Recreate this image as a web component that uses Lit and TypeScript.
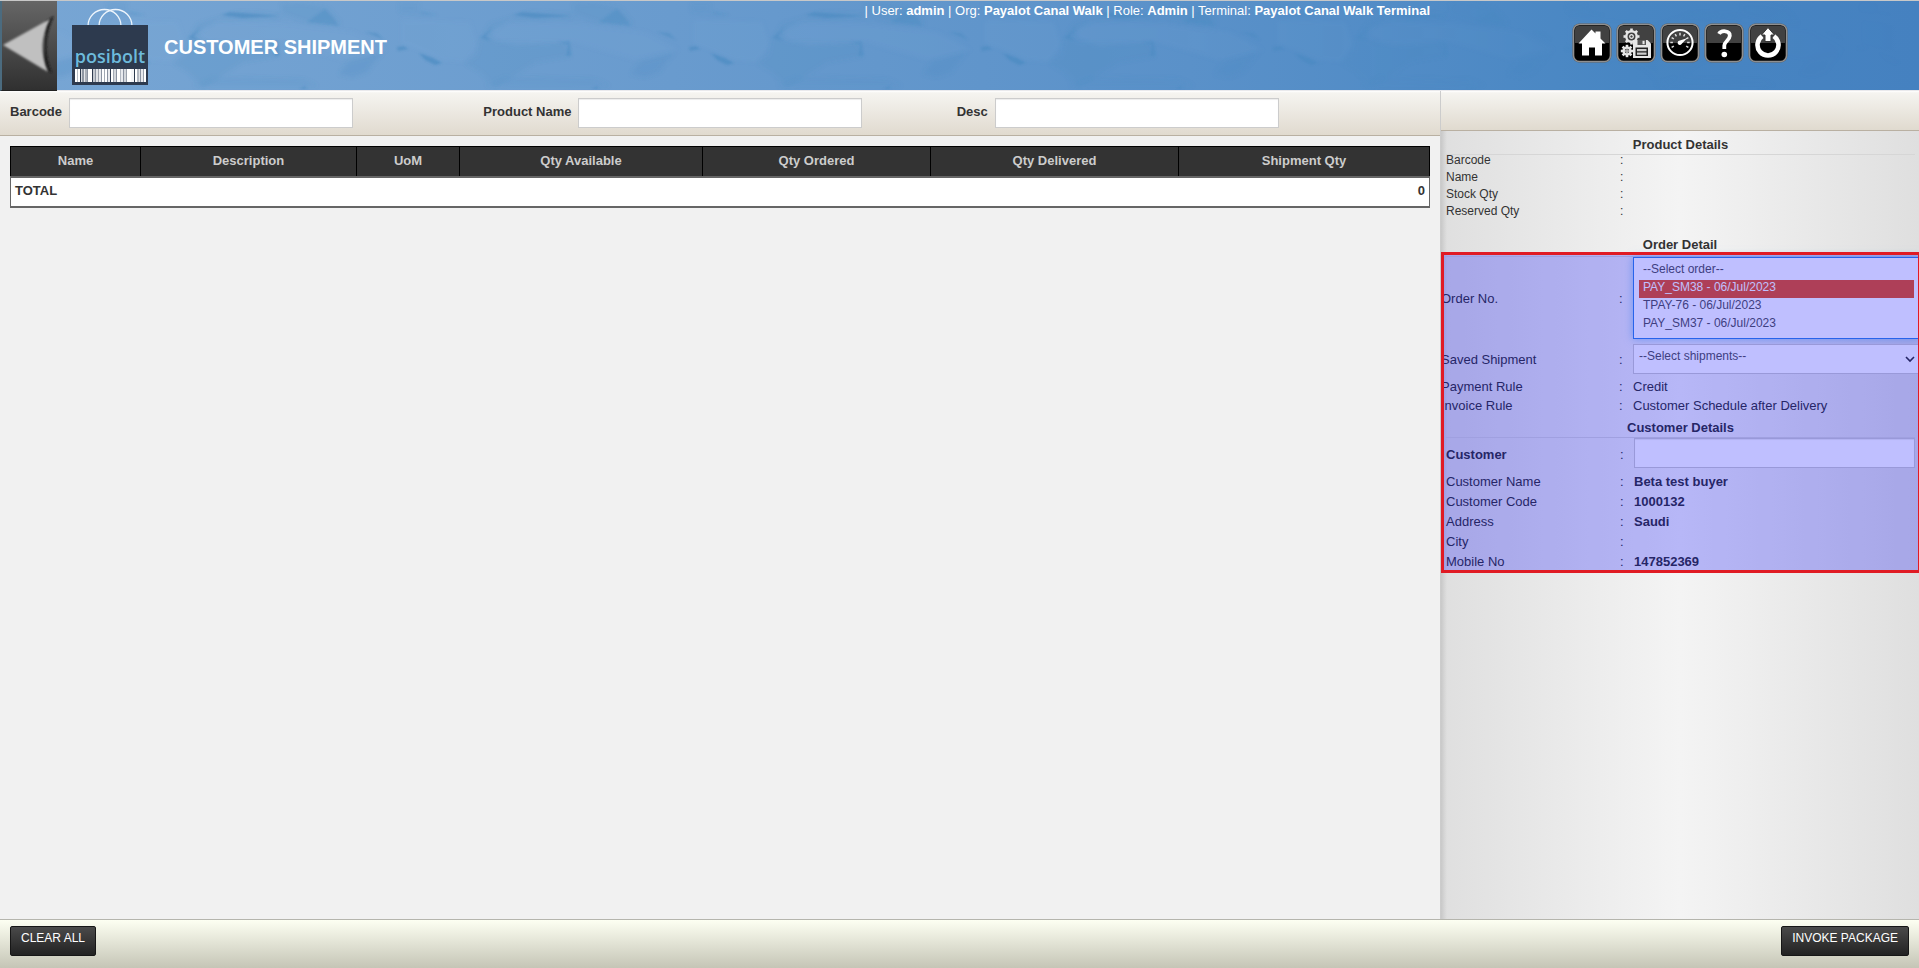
import { LitElement, html, svg, css } from "lit";
import { customElement } from "lit/decorators.js";

const ORDERS = ["--Select order--", "PAY_SM38 - 06/Jul/2023", "TPAY-76 - 06/Jul/2023", "PAY_SM37 - 06/Jul/2023"];
const COLUMNS = [
  ["Name", "c-name"], ["Description", "c-desc"], ["UoM", "c-uom"], ["Qty Available", "c-avail"],
  ["Qty Ordered", "c-ord"], ["Qty Delivered", "c-del"], ["Shipment Qty", "c-ship"],
];
const CUSTOMER = [
  ["Customer Name", "Beta test buyer"], ["Customer Code", "1000132"], ["Address", "Saudi"],
  ["City", ""], ["Mobile No", "147852369"],
];

// Barcode stripes of the logo: x, width, grey level
const BARS: [number, number, string][] = [
  [3, 2, "#fff"], [5, 1, "#b9bfc6"], [6, 2, "#fff"], [9, 1, "#d8dbe0"], [10, 2, "#8e96a2"], [12, 1, "#e4e6ea"],
  [13, 2, "#a9afb8"], [15, 1, "#8a92a0"], [16, 4, "#fff"], [21, 2, "#c3c8cf"], [23, 1, "#8a92a0"], [24, 2, "#dfe2e6"],
  [26, 1, "#9aa1ac"], [27, 2, "#e8eaee"], [29, 1, "#8a92a0"], [30, 2, "#fff"], [32, 1, "#a2a9b3"], [33, 2, "#fff"],
  [35, 1, "#8a92a0"], [36, 2, "#e8eaee"], [39, 2, "#fff"], [41, 1, "#a2a9b3"], [42, 2, "#d3d7dc"], [44, 1, "#8a92a0"],
  [45, 3, "#fff"], [48, 1, "#b1b7c0"], [49, 2, "#e8eaee"], [51, 1, "#8a92a0"], [52, 2, "#d3d7dc"], [54, 1, "#9aa1ac"],
  [55, 4, "#fff"], [59, 3, "#f4f5f7"], [63, 2, "#fff"], [65, 2, "#b1b7c0"], [67, 1, "#dfe2e6"], [68, 1, "#8a92a0"],
  [69, 2, "#e8eaee"], [71, 1, "#9aa1ac"], [72, 2, "#fff"],
];

const gear = (cx: number, cy: number, r: number) => svg`
  <g transform="translate(${cx} ${cy})" stroke="#e6e6e6" fill="none">
    <circle r=${r} stroke-width="2.4"/>
    <circle r=${r * 0.35} stroke-width="1.2"/>
    ${[0, 45, 90, 135, 180, 225, 270, 315].map(
      (a) => svg`<path d="M0 ${-r - 0.5}V${-r - 2.8}" stroke-width="2.6" transform="rotate(${a})"/>`)}
  </g>`;

const ticks = [-120, -90, -60, -30, 0, 30, 60, 90, 120];

const ICONS = [
  ["Home", svg`<path fill="#fff" d="M19.5 6.5L23.5 10.5V8.5H28.5V15.5L33.5 20.5H30V32.5H23V24.5H17V32.5H10V20.5H6.5Z"/>`],
  ["Save settings", svg`${gear(15.5, 13.5, 5.2)}${gear(11, 28, 3.4)}
    <path fill="#e6e6e6" d="M17 17H31.5L35 20.5V35H17Z"/>
    <path fill="#555" d="M21.5 17H30V22H21.5Z"/><path fill="#e6e6e6" d="M26.5 17.8H28.6V21.2H26.5Z"/>
    <path fill="#222" d="M19.5 24.5H32V33H19.5Z"/><path fill="#ccc" d="M21 26H30.5V28.2H21ZM21 29.6H30.5V31.8H21Z"/>`],
  ["Dashboard", svg`<circle cx="20" cy="19.5" r="12.6" fill="none" stroke="#fff" stroke-width="2"/>
    ${ticks.map((a) => svg`<path d="M20 9.8V12.4" stroke="#ddd" stroke-width="1.5" transform="rotate(${a} 20 19.5)"/>`)}
    <path fill="#fff" d="M27 15.2L21.8 20.8A2.2 2.2 0 1 1 19 17.8Z"/>`],
  ["Help", svg`<path fill="none" stroke="#fff" stroke-width="3.8" d="M15 10.8C17 7.2 26 7 25.8 12.8C25.4 17.6 20.3 18.4 20.3 22.6V26"/>
    <circle cx="20.3" cy="31.5" r="2.8" fill="#fff"/>`],
  ["Log out", svg`<path fill="none" stroke="#fff" stroke-width="4.6" d="M14.2 13.2A10.5 10.5 0 1 0 25.8 13.2"/>
    <path fill="#fff" stroke="#333" stroke-width="1" d="M20 4.5L26.5 12H23V18.5H17V12H13.5Z"/>`],
] as const;

@customElement("app-root")
export class AppRoot extends LitElement {
  static styles = css`
    :host {
      display: flex; flex-direction: column; min-height: 100vh; box-sizing: border-box;
      font: 13px/17px "Liberation Sans", Arial, sans-serif; color: #333; background: #f1f1f1;
      overflow-x: hidden;
    }
    *, *::before, *::after { box-sizing: border-box; }
    .split { display: grid; grid-template-columns: minmax(0, 1440fr) minmax(0, 479fr); }

    .header {
      position: relative; height: 91px; border-top: 1px solid #c8c8c8; border-bottom: 1px solid #e9e9ec;
      background: linear-gradient(90deg, #78a6d4, #699bce 35%, #5a91c9 62%, #4886c3 85%, #4581c0);
      color: #fff;
    }
    .texture { position: absolute; inset: 0; width: 100%; height: 100%; }
    .brand { position: relative; display: flex; align-items: flex-start; }
    .back {
      width: 57px; height: 90px; flex: none; padding: 0; border: 0; border-left: 2px solid #4b6b7f;
      border-bottom: 1px solid #222; background: linear-gradient(#666, #303030); cursor: pointer;
    }
    .back svg, .logo { display: block; }
    .logo { margin: 6px 0 0 15px; flex: none; }
    .title { margin: 33px 0 0 16px; font-size: 20px; line-height: 26px; font-weight: bold; white-space: nowrap; }
    .session { margin: 1px 10px 0 auto; line-height: 18px; white-space: nowrap; }
    .tools { position: relative; display: flex; gap: 4px; padding: 22px 0 0 132px; }
    .tool { width: 40px; height: 40px; flex: none; display: block; }

    .body { flex: 1; }
    .main { min-width: 0; }
    .bar { background: linear-gradient(#fff 0, #f5f4f0 2px, #e0dacf); border-bottom: 1px solid #b9b0a2; }
    .filters { display: grid; grid-template-columns: repeat(3, 1fr); height: 45px; padding: 7px 10px 0; }
    .field { display: flex; align-items: flex-start; }
    .field label { font-weight: bold; line-height: 28px; margin-right: 7px; white-space: nowrap; }
    .box { border: 1px solid #ccc; height: 30px; background: #fff; box-shadow: inset 0 1px 1px rgba(0,0,0,.075);
      font: inherit; color: #555; padding: 4px 6px; border-radius: 0; outline: 0; min-width: 0; }
    .field .box { width: 284px; }

    .grid-wrap { padding: 10px 10px 0; }
    .lines { width: 100%; table-layout: fixed; border-collapse: separate; border-spacing: 0; }
    .c-name { width: 130px; } .c-desc { width: 216px; } .c-uom { width: 103px; } .c-avail { width: 243px; }
    .c-ord { width: 228px; } .c-del { width: 248px; } .c-ship { width: 252px; }
    .lines th { height: 30px; padding: 0 0 3px; background: #333; color: #ccc; border-top: 1px solid #000;
      border-left: 1px solid #000; }
    .lines th:last-child { border-right: 1px solid #000; }
    .lines td { height: 32px; padding: 0 4px 4px; background: #fff; font-weight: bold;
      border-top: 2px solid #666; border-bottom: 2px solid #666; }
    .lines td:first-child { border-left: 1px solid #666; }
    .lines td:last-child { border-right: 1px solid #666; text-align: right; }

    .side { border-left: 1px solid #ccc; overflow: hidden;
      background: linear-gradient(90deg, rgba(0,0,0,.1), transparent 6px), linear-gradient(90deg, #dfdfdf, #f4f4f4 50%, #dfdfdf); }
    .side .bar { height: 40px; }
    .heading { margin: 0; font-size: 13px; font-weight: bold; text-align: center; }
    .ruled { border-bottom: 1px solid #d6d6d6; margin: 0 4px 0 5px; padding-top: 3px; line-height: 19px; }
    .product { padding-top: 1px; margin-bottom: 18px; font-size: 12px; }
    .product .ruled { margin-bottom: -3px; }
    .row { display: grid; grid-template-columns: 174px 14px minmax(0, 1fr); padding-left: 5px; }
    .strong { font-weight: bold; }
    .order-title { line-height: 14px; }

    .selected-area { position: relative; padding: 4px 0 1px; }
    .selected-area::after { content: ""; position: absolute; inset: 0 -2px 0 0; border: 3px solid #e01b24;
      background: rgba(0,0,255,.25); background-clip: padding-box; pointer-events: none; }
    .order { border-top: 1px solid #d6d6d6; }
    .order .row { padding-left: 0; grid-template-columns: 178px 14px minmax(0, 1fr); line-height: 19px; align-items: center; }
    .order .row + .row.picker { margin-top: 5px; margin-bottom: 3px; }
    .orders {
      display: block; width: 100%; height: 82px; padding: 4px 5px; border: 1px solid #3584e4; border-right: 0; border-radius: 0;
      background: #fff; color: #555; font: 12px/17px "Liberation Sans", Arial, sans-serif; outline: 0; overflow: hidden;
      box-shadow: 0 0 8px rgba(82,168,236,.6);
    }
    .orders option { height: 18px; min-height: 18px; padding: 0 4px 2px; line-height: 16px; }
    .orders option:checked { background: #e95420 linear-gradient(#e95420, #e95420); color: #fff; }
    .drop { position: relative; }
    .drop select { appearance: none; display: block; width: 100%; height: 30px; padding: 0 24px 5px 5px; border: 1px solid #ccc;
      border-right: 0; border-radius: 0; background: #fff; color: #555; font: 12px/17px "Liberation Sans", Arial, sans-serif; outline: 0; }
    .drop svg { position: absolute; right: 4px; top: 11px; pointer-events: none; }
    .customer .row { line-height: 20px; padding-right: 4px; }
    .customer .row.entry { line-height: 34px; }
    .customer .box { width: 100%; }

    .footer { display: flex; justify-content: space-between; height: 49px; padding: 6px 10px; border-top: 1px solid #b5b5ad;
      background: linear-gradient(#fdfff2, #c5c5b6); }
    .btn { height: 30px; padding: 0 10px 5px; border: 1px solid #161616; border-radius: 2px; color: #fff; cursor: pointer;
      background: linear-gradient(#4a4a4a, #222); font: 12px/17px "Liberation Sans", Arial, sans-serif; white-space: nowrap; }
  `;

  private texture() {
    return html`<svg class="texture" aria-hidden="true">
      <defs>
        <filter id="soft" x="-10%" y="-10%" width="120%" height="120%"><feGaussianBlur stdDeviation="2"/></filter>
        <filter id="fine" x="-10%" y="-10%" width="120%" height="120%"><feGaussianBlur stdDeviation=".9"/></filter>
        <linearGradient id="fade"><stop offset="0" stop-color="#ddd"/><stop offset=".6" stop-color="#aaa"/><stop offset=".85" stop-color="#333"/><stop offset="1" stop-color="#000"/></linearGradient>
        <mask id="m"><rect width="100%" height="100%" fill="url(#fade)"/></mask>
        <pattern id="rock" x="103" y="-1" width="292" height="91" patternUnits="userSpaceOnUse">
          <g filter="url(#soft)" fill="#3f86bd">
            <path opacity=".16" d="M85 40L95 24L135 12L180 14L176 18L115 20L92 35L100 42L170 43L176 56L140 62L100 88L85 72L70 63L82 55Z"/>
            <path opacity=".16" d="M178 4L200 3L225 8L238 24L204 22L180 14Z"/>
            <path opacity=".22" d="M236 74L245 62L280 52L268 66L264 72L250 77Z"/>
            <path opacity=".14" d="M4 12L44 16L22 11L24 3L4 3Z"/>
            <path opacity=".14" d="M90 86L110 77L200 79L215 86Z"/>
          </g>
          <g filter="url(#fine)" fill="#3f86bd">
            <path opacity=".35" d="M204 22L222 9L229 16L236 26Z"/>
            <path opacity=".6" d="M118 15L127 12L176 16L140 18Z"/>
            <path opacity=".65" d="M24 53L38 58L47 63L40 65L30 60Z"/>
            <path opacity=".6" d="M2 47L9 46L13 49L3 51Z"/>
            <path opacity=".45" d="M85 38L98 27L91 36L96 41ZM162 42L175 41L176 56L171 56L173 45ZM24 12L42 15L28 14ZM262 32L274 33L281 40ZM196 89L202 86L204 89Z"/>
          </g>
          <g filter="url(#soft)" fill="#8db6e0">
            <path opacity=".12" d="M98 28L115 22L185 24L250 32L284 50L240 60L178 42L120 46L98 38Z"/>
            <path opacity=".1" d="M6 20L75 22L82 45L70 62L48 60L14 46L6 44Z"/>
          </g>
        </pattern>
      </defs>
      <rect width="100%" height="100%" fill="url(#rock)" mask="url(#m)"/>
    </svg>`;
  }

  private logo() {
    return html`<svg class="logo" width="76" height="79" viewBox="0 0 76 79" role="img" aria-label="posibolt">
      <g fill="none" stroke="#eef5fc" stroke-width="1.3"><path d="M16 19A16.5 16.5 0 0 1 49 19"/><path d="M27 19A16.5 16.5 0 0 1 60 19"/></g>
      <rect y="18" width="76" height="60" fill="#2d3a4e"/>
      <text x="38" y="56" text-anchor="middle" font-family="Open Sans" font-weight="600" font-size="18" fill="#6dbbdc">posibolt</text>
      ${BARS.map(([x, w, c]) => svg`<rect x=${x} y="62" width=${w} height="13" fill=${c}/>`)}
    </svg>`;
  }

  private icon(name: string, glyph: unknown) {
    return html`<a class="tool" href="#" aria-label=${name}><svg width="40" height="40" viewBox="0 0 40 40">
      <rect x=".5" y=".5" width="39" height="39" rx="7" fill="#555"/>
      <rect x="1.5" y="1.5" width="37" height="37" rx="6" fill="#000" stroke="#8f8f8f" stroke-width="1.6"/>
      <path fill="#414141" d="M3 20V7A4 4 0 0 1 7 3H33A4 4 0 0 1 37 7V20Z"/>
      ${glyph}</svg></a>`;
  }

  render() {
    return html`
      <header class="header split">
        ${this.texture()}
        <div class="brand">
          <button class="back" aria-label="Back"><svg width="55" height="89" viewBox="0 0 55 89">
            <defs><filter id="b"><feGaussianBlur stdDeviation=".8"/></filter></defs>
            <path filter="url(#b)" fill="#1c1c1c" d="M44 20L52 15Q38 44 50 72L42 68Z"/>
            <path filter="url(#b)" fill="#c0c0c0" d="M1 44L48 18Q34 44 46 71Z"/></svg></button>
          ${this.logo()}
          <h1 class="title">CUSTOMER SHIPMENT</h1>
          <div class="session">| User: <b>admin</b> | Org: <b>Payalot Canal Walk</b> | Role: <b>Admin</b> | Terminal: <b>Payalot Canal Walk Terminal</b></div>
        </div>
        <nav class="tools">${ICONS.map(([n, g]) => this.icon(n, g))}</nav>
      </header>

      <div class="body split">
        <main class="main">
          <div class="bar filters">
            <div class="field"><label for="barcode">Barcode</label><input class="box" id="barcode"></div>
            <div class="field"><label for="pname">Product Name</label><input class="box" id="pname"></div>
            <div class="field"><label for="desc">Desc</label><input class="box" id="desc"></div>
          </div>
          <div class="grid-wrap">
            <table class="lines">
              <thead><tr>${COLUMNS.map(([t, c]) => html`<th class=${c}>${t}</th>`)}</tr></thead>
              <tbody><tr><td colspan="6">TOTAL</td><td>0</td></tr></tbody>
            </table>
          </div>
        </main>

        <aside class="side">
          <div class="bar"></div>
          <section class="product">
            <h2 class="heading ruled">Product Details</h2>
            ${["Barcode", "Name", "Stock Qty", "Reserved Qty"].map((l) => html`<div class="row"><span>${l}</span><span>:</span></div>`)}
          </section>
          <h2 class="heading order-title">Order Detail</h2>
          <div class="selected-area">
            <section class="order">
              <div class="row"><label for="orders">Order No.</label><span>:</span>
                <select class="orders" id="orders" size="4">
                  ${ORDERS.map((o, i) => html`<option ?selected=${i === 1}>${o}</option>`)}
                </select></div>
              <div class="row picker"><label for="saved">Saved Shipment</label><span>:</span>
                <div class="drop"><select id="saved"><option>--Select shipments--</option></select>
                  <svg width="10" height="8" viewBox="0 0 10 8"><path d="M1 2L5 6L9 2" fill="none" stroke="#333" stroke-width="1.6"/></svg></div></div>
              <div class="row"><span>Payment Rule</span><span>:</span><span>Credit</span></div>
              <div class="row"><span>Invoice Rule</span><span>:</span><span>Customer Schedule after Delivery</span></div>
            </section>
            <section class="customer">
              <h2 class="heading ruled">Customer Details</h2>
              <div class="row entry"><label class="strong" for="customer">Customer</label><span>:</span><input class="box" id="customer"></div>
              ${CUSTOMER.map(([l, v]) => html`<div class="row"><span>${l}</span><span>:</span><span class="strong">${v}</span></div>`)}
            </section>
          </div>
        </aside>
      </div>

      <footer class="footer">
        <button class="btn">CLEAR ALL</button>
        <button class="btn">INVOKE PACKAGE</button>
      </footer>`;
  }
}
